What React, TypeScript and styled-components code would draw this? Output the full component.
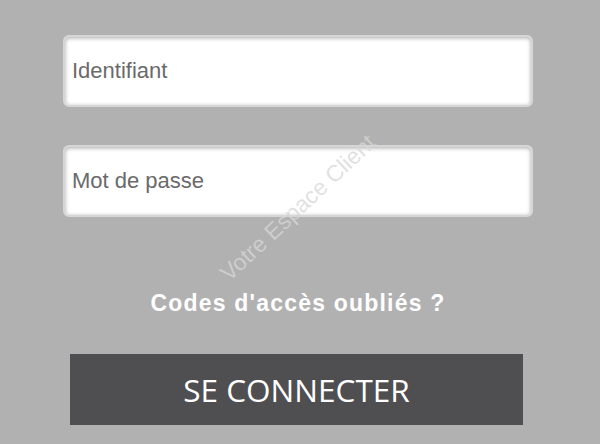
import styled, { createGlobalStyle } from "styled-components";

const Global = createGlobalStyle`
  html, body {
    margin: 0;
    padding: 0;
    background: #b1b1b1;
  }
  body {
    font-family: "Liberation Sans", Arial, sans-serif;
  }
`;

const Page = styled.div`
  position: relative;
  width: 600px;
  height: 444px;
  overflow: hidden;
  background: #b1b1b1;
`;

const Form = styled.form`
  display: flex;
  flex-direction: column;
  width: 470px;
  padding: 35px 0 0 63px;
`;

const Field = styled.input`
  box-sizing: border-box;
  width: 470px;
  height: 72px;
  margin: 0 0 ${(p: { $gap?: number }) => p.$gap ?? 0}px;
  padding: 0 7px;
  border: 2px solid #d6d6d6;
  border-radius: 6px;
  background: #fff;
  box-shadow: inset 0 1px 4px rgba(0, 0, 0, 0.35);
  font-family: "Liberation Sans", Arial, sans-serif;
  font-size: 22px;
  color: #333;
  outline: none;
  &::placeholder {
    color: #6a6a6a;
    opacity: 1;
  }
`;

const Forgot = styled.a`
  display: block;
  margin: 73px 0 38px;
  line-height: 26px;
  text-align: center;
  font-family: "Liberation Sans", Arial, sans-serif;
  font-weight: bold;
  font-size: 23px;
  letter-spacing: 1.2px;
  color: #fff;
  text-decoration: none;
`;

const Submit = styled.button`
  display: flex;
  align-items: center;
  justify-content: center;
  width: 453px;
  height: 71px;
  margin-left: 7px;
  padding: 0;
  border: none;
  background: #4f4f51;
  color: #fff;
  font-family: "Open Sans", "DejaVu Sans", sans-serif;
  font-size: 31.5px;
  cursor: pointer;
`;

const Watermark = styled.div`
  position: absolute;
  left: 298px;
  top: 208px;
  transform: translate(-50%, -50%) rotate(-43deg);
  white-space: nowrap;
  pointer-events: none;
  font-family: "Liberation Sans", Arial, sans-serif;
  font-size: 23px;
  color: rgba(215, 215, 215, 0.75);
`;

export default function App() {
  return (
    <Page>
      <Global />
      <Form onSubmit={(e) => e.preventDefault()}>
        <Field type="text" placeholder="Identifiant" $gap={38} />
        <Field type="password" placeholder="Mot de passe" />
        <Forgot href="#">Codes d'accès oubliés ?</Forgot>
        <Submit type="submit">SE CONNECTER</Submit>
      </Form>
      <Watermark>Votre Espace Client</Watermark>
    </Page>
  );
}
